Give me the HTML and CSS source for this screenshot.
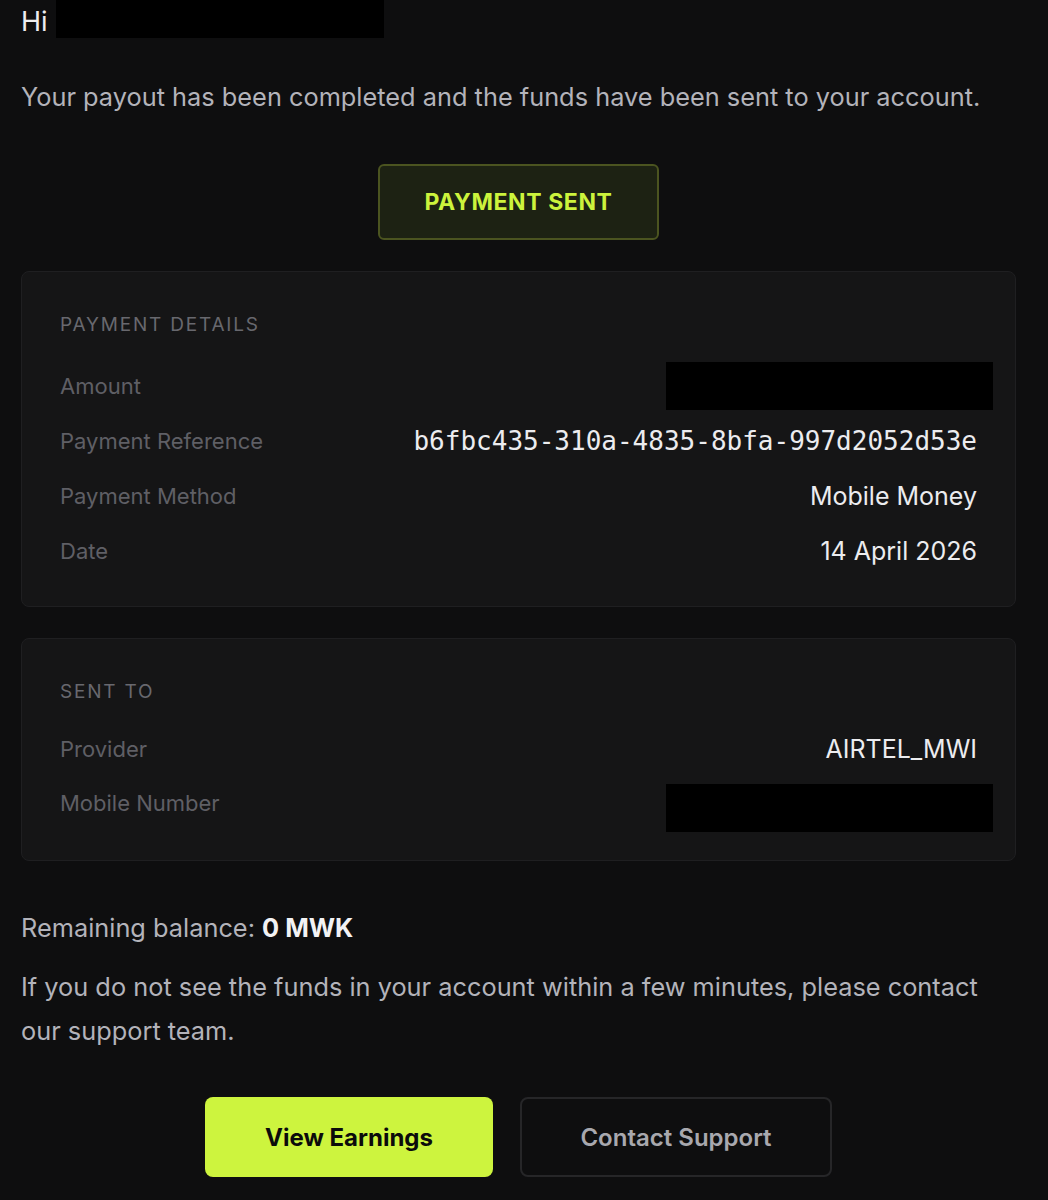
FILE: index.html
```html
<!DOCTYPE html>
<html lang="en">
<head>
<meta charset="utf-8">
<title>Payment sent</title>
<link rel="stylesheet" href="styles.css">
</head>
<body>
<main class="mail">
  <div class="greeting">
    <span class="hi">Hi</span>
    <span class="redact redact-name"></span>
  </div>
  <p class="lead">Your payout has been completed and the funds have been sent to your account.</p>

  <div class="badge-wrap">
    <div class="badge">PAYMENT SENT</div>
  </div>

  <section class="card">
    <h2 class="card-title">PAYMENT DETAILS</h2>
    <div class="row">
      <span class="label">Amount</span>
      <span class="redact redact-value"></span>
    </div>
    <div class="row">
      <span class="label">Payment Reference</span>
      <span class="value mono">b6fbc435-310a-4835-8bfa-997d2052d53e</span>
    </div>
    <div class="row">
      <span class="label">Payment Method</span>
      <span class="value">Mobile Money</span>
    </div>
    <div class="row">
      <span class="label">Date</span>
      <span class="value">14 April 2026</span>
    </div>
  </section>

  <section class="card card-sent">
    <h2 class="card-title">SENT TO</h2>
    <div class="row">
      <span class="label">Provider</span>
      <span class="value">AIRTEL_MWI</span>
    </div>
    <div class="row">
      <span class="label">Mobile Number</span>
      <span class="redact redact-value redact-low"></span>
    </div>
  </section>

  <p class="balance">Remaining balance: <strong>0 MWK</strong></p>
  <p class="note">If you do not see the funds in your account within a few minutes, please contact our support team.</p>

  <div class="actions">
    <a class="btn btn-primary" href="#">View Earnings</a>
    <a class="btn btn-secondary" href="#">Contact Support</a>
  </div>
</main>
</body>
</html>
```

FILE: styles.css
```css
html, body {
  margin: 0;
  padding: 0;
  background: #0e0e0f;
}
body {
  font-family: Inter, "Noto Sans", "Liberation Sans", sans-serif;
  color: #b3b3ba;
}
.mail {
  width: 995px;
  padding-left: 21px;
  box-sizing: content-box;
}
.greeting {
  display: flex;
  align-items: flex-start;
  height: 44px;
}
.hi {
  font-size: 27px;
  line-height: 44px;
  color: #ededf0;
}
.redact {
  display: inline-block;
  background: #000;
}
.redact-name {
  width: 328px;
  height: 38px;
  margin-left: 8px;
}
.lead {
  margin: 31px 0 0;
  font-size: 25.35px;
  line-height: 44px;
  color: #b3b3ba;
}
.badge-wrap {
  display: flex;
  justify-content: center;
  margin-top: 45px;
}
.badge {
  width: 281px;
  height: 76px;
  box-sizing: border-box;
  display: flex;
  align-items: center;
  justify-content: center;
  background: #1d2213;
  border: 2px solid #4b5420;
  border-radius: 6px;
  color: #ccf33c;
  font-weight: 700;
  font-size: 23px;
  letter-spacing: 0.6px;
}
.card {
  margin-top: 31px;
  background: #151516;
  border: 1px solid #1f1f21;
  border-radius: 8px;
  padding: 38px 38px 28px;
}
.card-title {
  margin: 0 0 18px;
  font-size: 19px;
  font-weight: 400;
  line-height: 30px;
  letter-spacing: 1.8px;
  color: #68686e;
}
.card-sent .card-title {
  margin-bottom: 15px;
}
.card-sent {
  padding-bottom: 30px;
}
.card-sent .row {
  height: 54px;
}
.row {
  display: flex;
  justify-content: space-between;
  align-items: center;
  height: 55px;
}
.label {
  font-size: 22px;
  color: #5f5f65;
}
.value {
  font-size: 25px;
  color: #ececef;
}
.mono {
  font-family: "DejaVu Sans Mono", "Liberation Mono", monospace;
  font-size: 26px;
}
.redact-value {
  width: 327px;
  height: 48px;
  margin-right: -16px;
}
.redact-low {
  margin-top: 10px;
}
.balance {
  margin: 45px 0 0;
  font-size: 25.35px;
  line-height: 44px;
  color: #b3b3ba;
}
.balance strong {
  color: #f2f2f4;
  font-weight: 700;
}
.note {
  margin: 15px 0 0;
  font-size: 25.35px;
  line-height: 44px;
  color: #b3b3ba;
}
.actions {
  display: flex;
  justify-content: center;
  gap: 27px;
  margin-top: 44px;
}
.btn {
  display: flex;
  align-items: center;
  justify-content: center;
  height: 80px;
  box-sizing: border-box;
  border-radius: 8px;
  font-size: 24px;
  font-weight: 700;
  text-decoration: none;
}
.btn-primary {
  width: 288px;
  background: #cdf43e;
  color: #0b0b0b;
}
.btn-secondary {
  width: 312px;
  border: 2px solid #262628;
  color: #a8a8ae;
  font-weight: 600;
}
```
